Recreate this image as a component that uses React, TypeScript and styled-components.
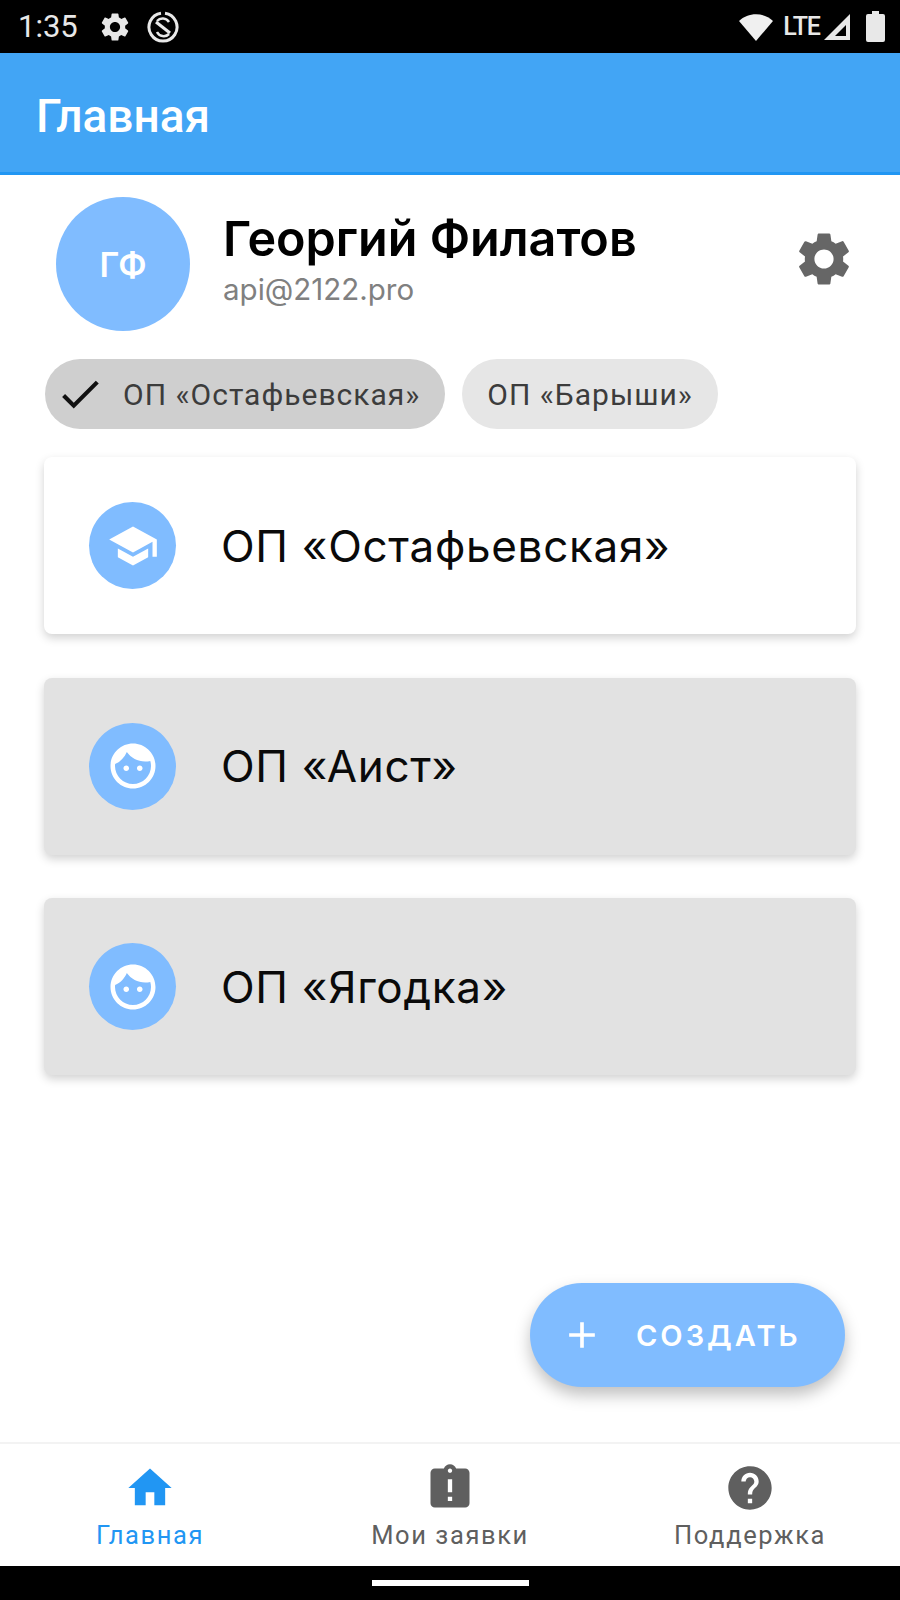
import styled, { createGlobalStyle } from 'styled-components';
import { MdAdd, MdAssignmentLate, MdCheck, MdHelp, MdHome, MdSchool, MdSettings } from 'react-icons/md';

const GlobalStyle = createGlobalStyle`
  * {
    box-sizing: border-box;
  }
  html, body {
    margin: 0;
    padding: 0;
    background: #ffffff;
  }
  body {
    font-family: 'Inter', 'Roboto', sans-serif;
  }
`;

const Screen = styled.div`
  width: 900px;
  height: 1600px;
  display: flex;
  flex-direction: column;
  overflow: hidden;
  background: #ffffff;
`;

const StatusBar = styled.div`
  height: 53px;
  flex: none;
  background: #000000;
  color: #e8e8e8;
  display: flex;
  align-items: center;
  justify-content: space-between;
  padding: 0 15px 0 18px;
`;

const Time = styled.span`
  font-family: 'Roboto', sans-serif;
  font-size: 31px;
  margin-right: 6px;
  width: 74px;
`;

const StatusLeft = styled.div`
  display: flex;
  align-items: center;
`;

const StatusIcons = styled.div`
  display: flex;
  align-items: center;
  gap: 14px;
`;

const StatusRight = styled.div`
  display: flex;
  align-items: center;
`;

const Lte = styled.span`
  font-family: 'Roboto', sans-serif;
  font-size: 25px;
  font-weight: 500;
  letter-spacing: -1px;
  margin: 0 3px 0 10px;
`;

const BatterySvg = styled.svg`
  margin-left: 15px;
`;

const AppBar = styled.header`
  height: 122px;
  flex: none;
  background: #42a5f5;
  border-bottom: 3px solid #2196f3;
  display: flex;
  align-items: center;
  padding: 6px 36px 0;
  color: #ffffff;
  font-family: 'Roboto', sans-serif;
  font-size: 46px;
  font-weight: 500;
`;

const Content = styled.main`
  position: relative;
  flex: 1;
  padding: 22px 44px 0;
  display: flex;
  flex-direction: column;
`;

const Profile = styled.section`
  display: flex;
  align-items: flex-start;
  padding-left: 12px;
`;

const Avatar = styled.div`
  width: 134px;
  height: 134px;
  border-radius: 50%;
  flex: none;
  background: #80bcff;
  color: #ffffff;
  display: flex;
  align-items: center;
  justify-content: center;
  font-size: 34px;
  font-weight: 600;
`;

const ProfileText = styled.div`
  flex: 1;
  padding: 13px 0 0 33px;
  display: flex;
  flex-direction: column;
`;

const Name = styled.div`
  font-size: 48.5px;
  font-weight: 600;
  line-height: 58px;
  color: #000000;
`;

const Email = styled.div`
  font-size: 29.5px;
  line-height: 42px;
  color: #808080;
`;

const GearWrap = styled.div`
  color: #666666;
  display: flex;
  padding: 30px 0 0;
`;

const Chips = styled.div`
  display: flex;
  gap: 17px;
  margin: 28px 0 0 1px;
`;

const Chip = styled.div<{ $selected?: boolean }>`
  height: 70px;
  border-radius: 35px;
  display: flex;
  align-items: center;
  gap: 18px;
  padding: ${(p) => (p.$selected ? '0 25px 0 10px' : '0 25px')};
  background: ${(p) => (p.$selected ? '#cfcfcf' : '#e6e6e6')};
  color: #3c3c3c;
  font-family: 'Roboto', sans-serif;
  font-size: 30px;
  letter-spacing: 1px;
`;

const Cards = styled.div`
  display: flex;
  flex-direction: column;
  gap: 43.5px;
  margin-top: 28px;
`;

const Card = styled.div<{ $active?: boolean }>`
  height: 177px;
  border-radius: 8px;
  background: ${(p) => (p.$active ? '#ffffff' : '#e2e2e2')};
  box-shadow: 0 4px 10px rgba(0, 0, 0, 0.18);
  display: flex;
  align-items: center;
  padding-left: 45px;
  gap: 45px;
`;

const CardIcon = styled.div`
  width: 87px;
  height: 87px;
  border-radius: 50%;
  flex: none;
  background: #80bcff;
  color: #ffffff;
  display: flex;
  align-items: center;
  justify-content: center;
`;

const CardTitle = styled.div`
  font-size: 44px;
  color: #0a0a0a;
  letter-spacing: 0.7px;
`;

const Fab = styled.button`
  position: absolute;
  right: 55px;
  bottom: 55px;
  width: 315px;
  height: 104px;
  border: none;
  border-radius: 52px;
  background: #80bcff;
  color: #ffffff;
  display: flex;
  align-items: center;
  padding: 0 0 0 30px;
  gap: 32px;
  box-shadow: 0 8px 16px rgba(0, 0, 0, 0.25);
  font-family: 'Inter', sans-serif;
  font-size: 29px;
  font-weight: 600;
  letter-spacing: 3px;
`;

const BottomNav = styled.nav`
  height: 124px;
  flex: none;
  border-top: 2px solid #f3f3f3;
  display: grid;
  grid-template-columns: repeat(3, 1fr);
`;

const NavItem = styled.div<{ $active?: boolean }>`
  display: flex;
  flex-direction: column;
  align-items: center;
  padding-top: 18px;
  color: ${(p) => (p.$active ? '#2196f3' : '#5f5f5f')};
  font-family: 'Roboto', sans-serif;
  font-size: 25.5px;
  letter-spacing: 1.6px;
`;

const NavLabel = styled.span`
  margin-top: 6px;
`;

const GestureBar = styled.div`
  height: 34px;
  flex: none;
  background: #000000;
  display: flex;
  justify-content: center;
  padding-top: 14px;
`;

const GestureHandle = styled.div`
  width: 157px;
  height: 6px;
  background: #ffffff;
`;

const DataSaverIcon = () => (
  <svg width="34" height="34" viewBox="0 0 34 34" fill="none" stroke="#e8e8e8" strokeWidth="3">
    <path d="M19 3.2A14 14 0 1 1 15 3.2" />
    <path d="M10 12l14 11" />
    <path d="M23 12a7.500 7.500 0 0 0-12-1M11 22a7.500 7.500 0 0 0 12 2" strokeWidth="2.500" />
  </svg>
);

const WifiIcon = () => (
  <svg width="34" height="29" viewBox="0 0 34 29">
    <path d="M17 29L0 9C9 0 25 0 34 9z" fill="#f0f0f0" />
  </svg>
);

const SignalIcon = () => (
  <svg width="28" height="28" viewBox="0 0 28 28">
    <path d="M1 27L27 1v26z" fill="#e8e8e8" />
    <path d="M12 23L23 12v11z" fill="#000000" />
  </svg>
);

const BatteryIcon = () => (
  <BatterySvg width="19" height="31" viewBox="0 0 19 31">
    <path d="M6 0h7v3h4a2 2 0 0 1 2 2v24a2 2 0 0 1-2 2H2a2 2 0 0 1-2-2V5a2 2 0 0 1 2-2h4z" fill="#e8e8e8" />
  </BatterySvg>
);

// classic material "face" glyph, the one in react-icons has different hair
const FaceIcon = () => (
  <svg width="54" height="54" viewBox="0 0 24 24" fill="currentColor">
    <path d="M9 11.75c-.69 0-1.25.56-1.25 1.25s.56 1.25 1.25 1.25 1.25-.56 1.25-1.25-.56-1.25-1.25-1.25zm6 0c-.69 0-1.25.56-1.25 1.25s.56 1.25 1.25 1.25 1.25-.56 1.25-1.25-.56-1.25-1.25-1.25zM12 2C6.48 2 2 6.48 2 12s4.48 10 10 10 10-4.48 10-10S17.52 2 12 2zm0 18c-4.41 0-8-3.59-8-8 0-.29.02-.58.05-.86 2.36-1.05 4.23-2.98 5.21-5.37C11.07 8.33 14.05 10 17.42 10c.78 0 1.53-.09 2.25-.26.21.71.33 1.47.33 2.26 0 4.41-3.59 8-8 8z" />
  </svg>
);

const App = () => (
  <>
    <GlobalStyle />
    <Screen>
      <StatusBar>
        <StatusLeft>
          <Time>1:35</Time>
          <StatusIcons>
            <MdSettings size={34} />
            <DataSaverIcon />
          </StatusIcons>
        </StatusLeft>
        <StatusRight>
          <WifiIcon />
          <Lte>LTE</Lte>
          <SignalIcon />
          <BatteryIcon />
        </StatusRight>
      </StatusBar>
      <AppBar>Главная</AppBar>
      <Content>
        <Profile>
          <Avatar>ГФ</Avatar>
          <ProfileText>
            <Name>Георгий Филатов</Name>
            <Email>api@2122.pro</Email>
          </ProfileText>
          <GearWrap>
            <MdSettings size={64} />
          </GearWrap>
        </Profile>
        <Chips>
          <Chip $selected>
            <MdCheck size={50} color="#111111" />
            ОП «Остафьевская»
          </Chip>
          <Chip>ОП «Барыши»</Chip>
        </Chips>
        <Cards>
          <Card $active>
            <CardIcon>
              <MdSchool size={52} />
            </CardIcon>
            <CardTitle>ОП «Остафьевская»</CardTitle>
          </Card>
          <Card>
            <CardIcon>
              <FaceIcon />
            </CardIcon>
            <CardTitle>ОП «Аист»</CardTitle>
          </Card>
          <Card>
            <CardIcon>
              <FaceIcon />
            </CardIcon>
            <CardTitle>ОП «Ягодка»</CardTitle>
          </Card>
        </Cards>
        <Fab>
          <MdAdd size={44} />
          СОЗДАТЬ
        </Fab>
      </Content>
      <BottomNav>
        <NavItem $active>
          <MdHome size={52} />
          <NavLabel>Главная</NavLabel>
        </NavItem>
        <NavItem>
          <MdAssignmentLate size={52} />
          <NavLabel>Мои заявки</NavLabel>
        </NavItem>
        <NavItem>
          <MdHelp size={52} />
          <NavLabel>Поддержка</NavLabel>
        </NavItem>
      </BottomNav>
      <GestureBar>
        <GestureHandle />
      </GestureBar>
    </Screen>
  </>
);

export default App;
